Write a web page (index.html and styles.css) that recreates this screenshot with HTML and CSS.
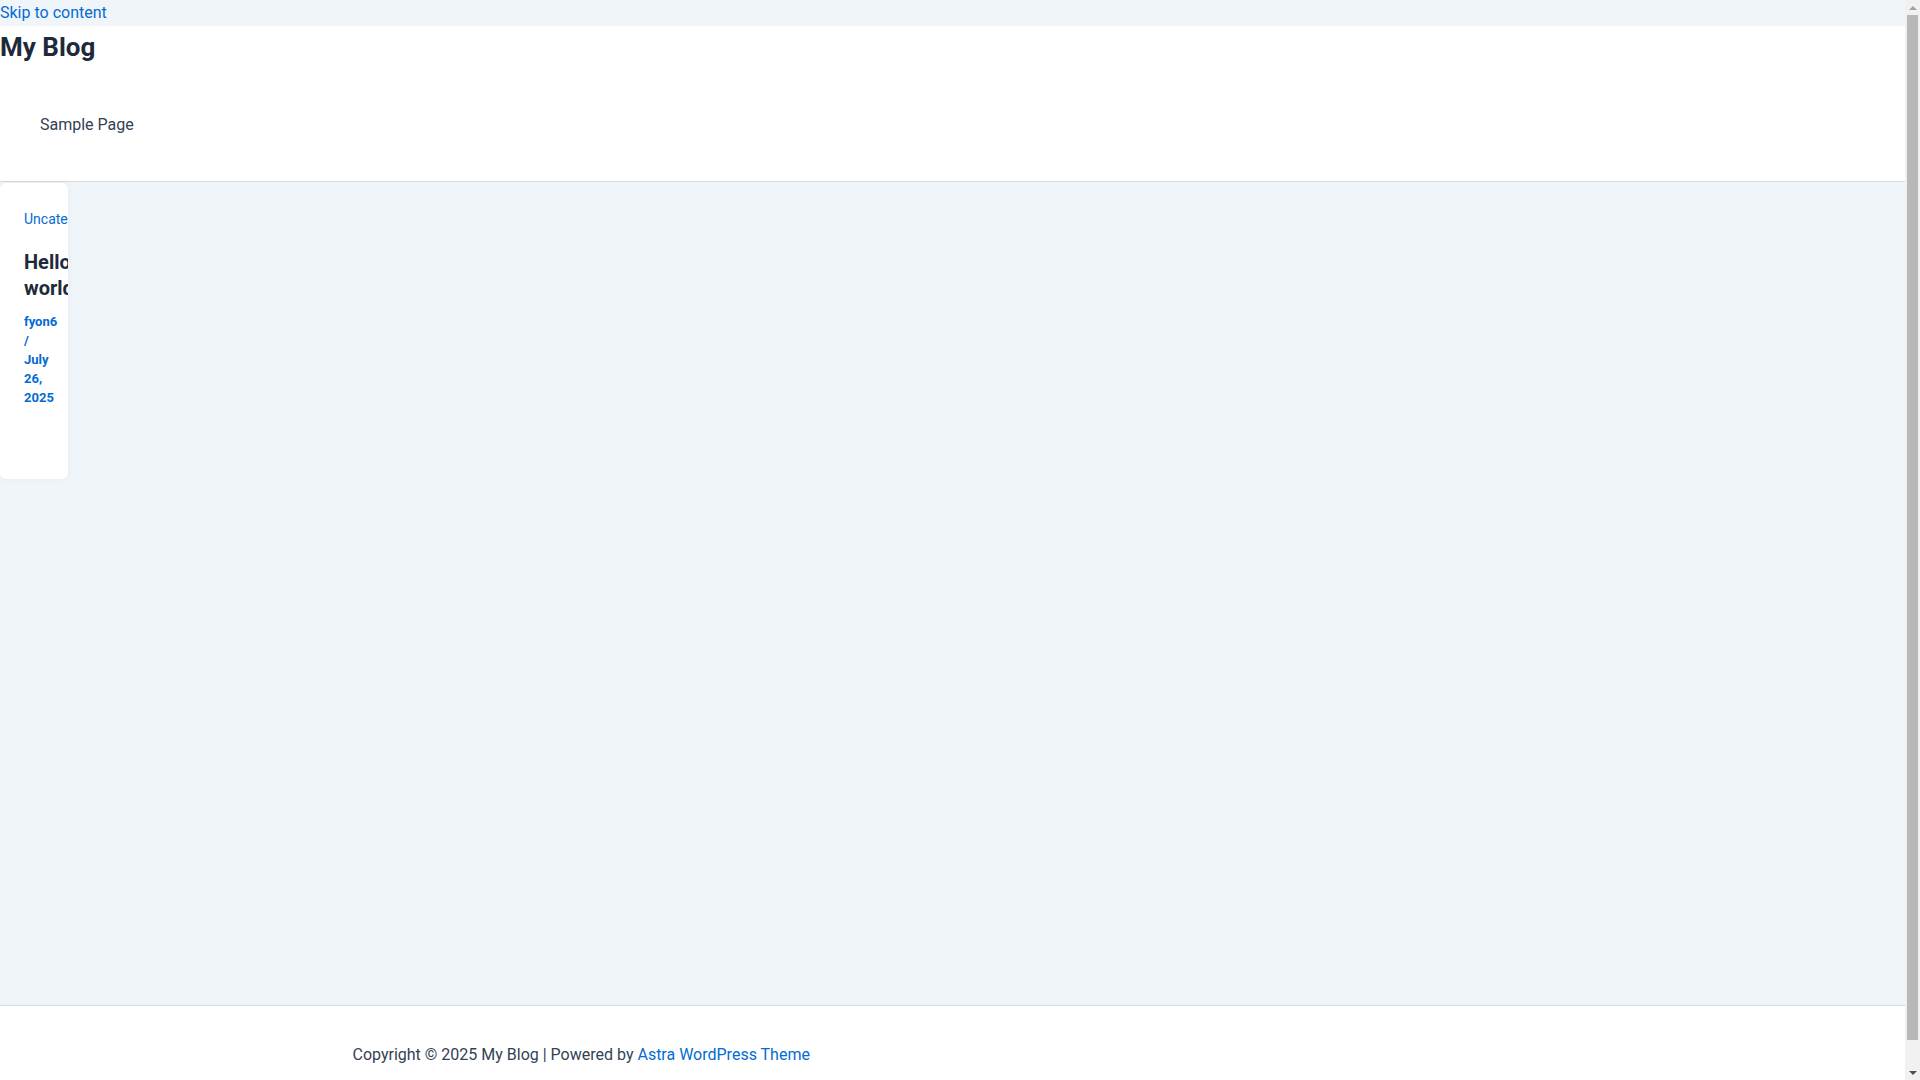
FILE: index.html
```html
<!DOCTYPE html>
<html lang="en">
<head>
  <meta charset="UTF-8">
  <meta name="viewport" content="width=device-width, initial-scale=1.0">
  <title>My Blog</title>
  <link rel="stylesheet" href="styles.css">
</head>
<body>
  <a class="skip-link" href="#content">Skip to content</a>

  <header class="site-header">
    <p class="site-title"><a href="#">My Blog</a></p>
    <nav class="main-nav">
      <ul>
        <li><a href="#">Sample Page</a></li>
      </ul>
    </nav>
  </header>

  <main id="content" class="site-content">
    <article class="post-card">
      <div class="cat-links"><a href="#">Uncategorized</a></div>
      <h2 class="entry-title"><a href="#">Hello world!</a></h2>
      <div class="entry-meta">
        <a href="#">fyon6</a> / <a href="#">July 26, 2025</a>
      </div>
    </article>
  </main>

  <footer class="site-footer">
    <div class="footer-inner">
      Copyright © 2025 My Blog | Powered by <a href="#">Astra WordPress Theme</a>
    </div>
  </footer>

  <!-- window scrollbar as it shows in the screenshot -->
  <div class="scrollbar">
    <span class="arrow up"></span>
    <div class="thumb"></div>
    <span class="arrow down"></span>
  </div>
</body>
</html>
```

FILE: styles.css
```css
body {
  margin: 0 15px 0 0;
  font-family: Roboto, 'Liberation Sans', sans-serif;
  font-size: 16px;
  color: #334155;
  background-color: #f0f5fa;
}
a {
  color: #046bd2;
  text-decoration: none;
}
.skip-link {
  display: block;
  height: 26px;
  line-height: 26px;
}
.site-header {
  background-color: #fff;
  border-bottom: 1px solid #d5dbe3;
}
.site-title {
  margin: 0;
  font-size: 26px;
  font-weight: 700;
  line-height: 42px;
}
.site-title a {
  color: #1e293b;
}
.main-nav ul {
  list-style: none;
  margin: 0;
  padding: 45px 0 44px 40px;
  line-height: 24px;
}
.main-nav a {
  color: #334155;
}
.site-content {
  height: 823px;
  padding-top: 1px;
  box-sizing: border-box;
}
.post-card {
  width: 68px;
  height: 296px;
  box-sizing: border-box;
  padding: 24px;
  background-color: #fff;
  border-radius: 6px;
  overflow: hidden;
  box-shadow: 0 0 8px rgba(30, 41, 59, 0.05);
}
.cat-links {
  font-size: 14px;
  line-height: 24px;
  white-space: nowrap;
}
.entry-title {
  margin: 18px 0 11px;
  font-size: 20px;
  line-height: 26px;
  font-weight: 700;
}
.entry-title a {
  color: #1e293b;
}
.entry-meta {
  font-size: 13px;
  font-weight: 700;
  line-height: 19px;
  color: #046bd2;
}
.site-footer {
  background-color: #fff;
  border-top: 1px solid #d5dbe3;
  padding: 37px 0 41px;
}
.footer-inner {
  max-width: 1200px;
  margin: 0 auto;
  line-height: 24px;
}
.scrollbar {
  position: fixed;
  top: 0;
  right: 0;
  width: 15px;
  height: 100vh;
  background-color: #f1f1f1;
  display: flex;
  flex-direction: column;
  align-items: center;
}
.arrow {
  flex: 0 0 15px;
  display: flex;
  align-items: center;
  justify-content: center;
}
.arrow::before {
  content: '';
  border-left: 4px solid transparent;
  border-right: 4px solid transparent;
}
.arrow.up::before {
  border-bottom: 4px solid #a3a3a3;
}
.arrow.down::before {
  border-top: 4px solid #505050;
}
.thumb {
  width: 11px;
  height: 1025px;
  background-color: #b8b8b8;
}
.scrollbar .arrow.down {
  margin-top: auto;
}
```
